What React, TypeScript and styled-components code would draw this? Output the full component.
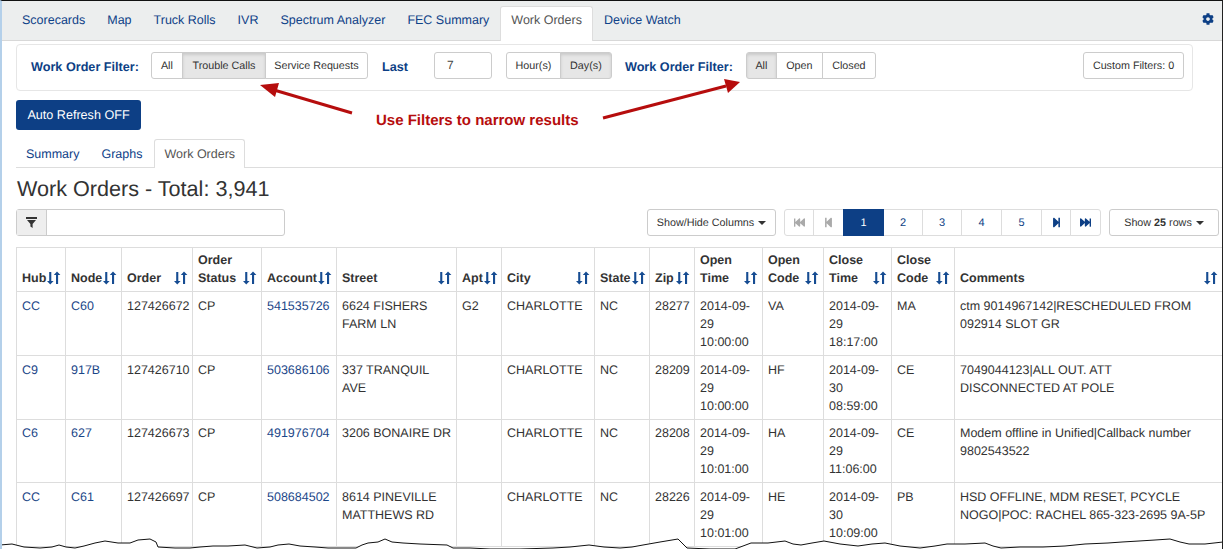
import React from "react";
import styled, { createGlobalStyle } from "styled-components";
import { FaCog, FaFastBackward, FaStepBackward, FaStepForward, FaFastForward } from "react-icons/fa";

const Global = createGlobalStyle`
  html, body { margin: 0; padding: 0; background: #fff; }
  body { font-family: "Liberation Sans", Arial, sans-serif; color: #333; text-rendering: geometricPrecision; }
  * { box-sizing: border-box; }
`;

const Frame = styled.div`
  position: relative;
  width: 1223px;
  height: 549px;
  overflow: hidden;
  background: #fff;
  border-top: 1px solid #111;
  border-left: 2px solid #b4d0ea;
  border-right: 1px solid #222;
`;

const Nav = styled.nav`
  height: 40px;
  background: #eceeee;
  border-bottom: 1px solid #d8d8d8;
  display: flex;
  align-items: flex-end;
  padding-left: 9px;
  position: relative;
`;

const NavTab = styled.div<{ $active?: boolean }>`
  height: ${(p) => (p.$active ? "35px" : "34px")};
  margin-bottom: ${(p) => (p.$active ? "-1px" : "0")};
  padding: 0 10px;
  border: 1px solid ${(p) => (p.$active ? "#ddd" : "transparent")};
  border-bottom: 0;
  border-radius: 3px 3px 0 0;
  background: ${(p) => (p.$active ? "#fff" : "transparent")};
  color: ${(p) => (p.$active ? "#555" : "#0f4288")};
  font-size: 12.5px;
  line-height: 26px;
  white-space: nowrap;
`;

const Cog = styled.span`
  margin-left: auto;
  margin-right: 8px;
  align-self: center;
  display: flex;
  margin-top: -4px;
  color: #0d3f85;
  font-size: 12px;
`;

const Content = styled.main`
  padding-left: 14px;
`;

const FilterPanel = styled.section`
  width: 1177px;
  height: 47px;
  margin-top: 3px;
  border: 1px solid #e6e6e6;
  border-radius: 4px;
  display: flex;
  align-items: flex-start;
  padding: 7px 8px 0 14px;
`;

const FilterLabel = styled.span<{ $ml?: number }>`
  font-size: 12.65px;
  font-weight: 700;
  color: #0d3f85;
  line-height: 31px;
  margin-left: ${(p) => p.$ml ?? 0}px;
  white-space: nowrap;
`;

const Group = styled.div<{ $ml: number }>`
  display: flex;
  margin-left: ${(p) => p.$ml}px;
`;

const GroupBtn = styled.div<{ $w: number; $on?: boolean }>`
  width: ${(p) => p.$w}px;
  height: 27px;
  margin-left: -1px;
  border: 1px solid #ccc;
  background: ${(p) => (p.$on ? "#e6e6e6" : "#fff")};
  box-shadow: ${(p) => (p.$on ? "inset 0 2px 3px rgba(0,0,0,.12)" : "none")};
  font-size: 10.75px;
  line-height: 26px;
  text-align: center;
  color: #333;
  white-space: nowrap;
  &:first-child { margin-left: 0; border-radius: 3px 0 0 3px; }
  &:last-child { border-radius: 0 3px 3px 0; }
`;

const NumberBox = styled.div`
  width: 58px;
  height: 27px;
  margin-left: 26px;
  border: 1px solid #ccc;
  border-radius: 3px;
  font-size: 12px;
  line-height: 24px;
  padding-left: 12px;
  color: #444;
`;

const PlainBtn = styled.div<{ $w: number; $h?: number }>`
  width: ${(p) => p.$w}px;
  height: ${(p) => p.$h ?? 27}px;
  border: 1px solid #ccc;
  border-radius: 3px;
  background: #fff;
  font-size: 10.75px;
  line-height: ${(p) => (p.$h ?? 27) - 1}px;
  text-align: center;
  color: #333;
  white-space: nowrap;
`;

const CustomFilters = styled(PlainBtn)`
  margin-left: auto;
`;

const RefreshBtn = styled.div`
  width: 125px;
  height: 30px;
  margin-top: 9px;
  border-radius: 3px;
  background: #0d3f85;
  color: #fff;
  font-size: 12.6px;
  line-height: 30px;
  text-align: center;
  white-space: nowrap;
`;

const SubNav = styled.div`
  height: 29px;
  margin-top: 9px;
  display: flex;
  align-items: flex-end;
  border-bottom: 1px solid #ddd;
`;

const SubTab = styled.div<{ $active?: boolean }>`
  height: ${(p) => (p.$active ? "29px" : "28px")};
  margin-bottom: ${(p) => (p.$active ? "-1px" : "0")};
  padding: 0 9px;
  margin-right: 2px;
  border: 1px solid ${(p) => (p.$active ? "#ddd" : "transparent")};
  border-bottom: 0;
  border-radius: 3px 3px 0 0;
  background: #fff;
  font-size: 12.5px;
  line-height: 28px;
  color: ${(p) => (p.$active ? "#555" : "#0f4288")};
  white-space: nowrap;
`;

const Title = styled.h1`
  margin: 9px 0 0 1px;
  font-size: 21.6px;
  font-weight: 400;
  line-height: 24px;
  color: #333;
  white-space: nowrap;
`;

const Toolbar = styled.div`
  display: flex;
  align-items: flex-start;
  margin-top: 8px;
  height: 27px;
`;

const FilterBox = styled.div`
  width: 269px;
  height: 27px;
  display: flex;
  border: 1px solid #ccc;
  border-radius: 3px;
`;

const FilterAddon = styled.div`
  width: 30px;
  background: #eee;
  border-right: 1px solid #ccc;
  display: flex;
  align-items: center;
  justify-content: center;
`;

const ColumnsBtn = styled(PlainBtn)`
  margin-left: 362px;
`;

const Caret = styled.span`
  display: inline-block;
  width: 0;
  height: 0;
  margin-left: 4px;
  vertical-align: middle;
  border-top: 4px solid #333;
  border-left: 4px solid transparent;
  border-right: 4px solid transparent;
`;

const Pager = styled.div`
  display: flex;
  margin-left: 8px;
  height: 27px;
`;

const PageItem = styled.div<{ $w: number; $on?: boolean; $off?: boolean }>`
  width: ${(p) => p.$w}px;
  height: 27px;
  margin-left: -1px;
  border: 1px solid ${(p) => (p.$on ? "#0d3f85" : "#ddd")};
  background: ${(p) => (p.$on ? "#0d3f85" : "#fff")};
  color: ${(p) => (p.$on ? "#fff" : p.$off ? "#aaa" : "#0d3f85")};
  font-size: 11px;
  display: flex;
  align-items: center;
  justify-content: center;
  position: relative;
  z-index: ${(p) => (p.$on ? 1 : 0)};
  &:first-child { margin-left: 0; border-radius: 3px 0 0 3px; }
  &:last-child { border-radius: 0 3px 3px 0; }
`;

const RowsBtn = styled(PlainBtn)`
  margin-left: 8px;
  b { font-weight: 700; }
`;

const Table = styled.table`
  width: 1205px;
  margin-top: 11px;
  table-layout: fixed;
  border-collapse: collapse;
  font-size: 12.5px;
  line-height: 18px;
`;

const Th = styled.th`
  border: 1px solid #ddd;
  padding: 2px 4px 4px 5px;
  height: 44px;
  vertical-align: bottom;
  text-align: left;
  font-weight: 700;
  color: #333;
  &:last-child { border-right: 0; }
`;

const ThInner = styled.div`
  display: flex;
  align-items: flex-end;
  justify-content: space-between;
`;

const SortSvg = styled.svg`
  flex: none;
  margin-bottom: 2px;
`;

const Td = styled.td`
  border: 1px solid #ddd;
  padding: 5px 2px 4px 5px;
  height: 64px;
  vertical-align: top;
  color: #333;
  tr:nth-child(3) > & { padding-top: 4px; height: 63px; }
  &:last-child { border-right: 0; padding-right: 14px; }
`;

const CellLink = styled.span`
  color: #1a4688;
`;

const Overlay = styled.svg`
  position: absolute;
  left: -2px;
  top: -1px;
  pointer-events: none;
`;

const Annotation = styled.div`
  position: absolute;
  left: 374px;
  top: 111px;
  font-size: 15px;
  font-weight: 700;
  line-height: 18px;
  color: #b60d0d;
  white-space: nowrap;
`;

const SortIcon = () => (
  <SortSvg width="15" height="14" viewBox="0 0 15 14">
    <path d="M3.2 1h2.1v9h2.3L4.25 13.5 1 10h2.2z" fill="#164c92" />
    <path d="M10 13h2.1V4h2.3L11 .5 7.8 4H10z" fill="#164c92" />
  </SortSvg>
);

const FunnelIcon = () => (
  <svg width="11" height="11" viewBox="0 0 11 11">
    <rect x="0" y="0" width="11" height="2" fill="#333" />
    <path d="M1 3h9L6.6 7v4L4.4 9.6V7z" fill="#333" />
  </svg>
);

const columns: { w: number; label: React.ReactNode }[] = [
  { w: 49, label: "Hub" },
  { w: 56, label: "Node" },
  { w: 71, label: "Order" },
  { w: 69, label: <>Order<br />Status</> },
  { w: 75, label: "Account" },
  { w: 120, label: "Street" },
  { w: 45, label: "Apt" },
  { w: 93, label: "City" },
  { w: 55, label: "State" },
  { w: 45, label: "Zip" },
  { w: 68, label: <>Open<br />Time</> },
  { w: 61, label: <>Open<br />Code</> },
  { w: 68, label: <>Close<br />Time</> },
  { w: 63, label: <>Close<br />Code</> },
  { w: 267, label: "Comments" },
];

const rows = [
  ["CC", "C60", "127426672", "CP", "541535726", "6624 FISHERS FARM LN", "G2", "CHARLOTTE", "NC", "28277", "2014-09-29 10:00:00", "VA", "2014-09-29 18:17:00", "MA", "ctm 9014967142|RESCHEDULED FROM 092914 SLOT GR"],
  ["C9", "917B", "127426710", "CP", "503686106", "337 TRANQUIL AVE", "", "CHARLOTTE", "NC", "28209", "2014-09-29 10:00:00", "HF", "2014-09-30 08:59:00", "CE", "7049044123|ALL OUT. ATT DISCONNECTED AT POLE"],
  ["C6", "627", "127426673", "CP", "491976704", "3206 BONAIRE DR", "", "CHARLOTTE", "NC", "28208", "2014-09-29 10:01:00", "HA", "2014-09-29 11:06:00", "CE", "Modem offline in Unified|Callback number 9802543522"],
  ["CC", "C61", "127426697", "CP", "508684502", "8614 PINEVILLE MATTHEWS RD", "", "CHARLOTTE", "NC", "28226", "2014-09-29 10:01:00", "HE", "2014-09-30 10:09:00", "PB", "HSD OFFLINE, MDM RESET, PCYCLE NOGO|POC: RACHEL 865-323-2695 9A-5P"],
];

const linked = new Set([0, 1, 4]);

const tornEdge =
  "M0 545 L12 544 L24 547 L40 548 L52 547 L59 545 L66 547 L75 548 L84 546 L95 543 L105 541 L118 543 L130 543 L138 540 L150 539 L156 542 L158 547 L175 548 L190 548 L200 547 L213 546 L228 546 L245 545 L257 548 L270 547 L278 545 L289 544 L300 546 L315 547 L328 548 L356 548 L362 545 L368 543 L378 542 L385 539 L392 542 L403 543 L420 544 L447 545 L453 548 L470 548 L490 549 L520 549 L553 548 L570 547 L589 545 L604 547 L620 548 L632 547 L643 545 L660 542 L678 539 L683 544 L687 548 L710 549 L735 549 L743 546 L751 543 L768 543 L785 541 L793 544 L801 545 L812 543 L824 541 L840 544 L858 546 L872 544 L885 543 L900 546 L920 548 L935 546 L947 544 L965 544 L985 543 L993 546 L1001 548 L1020 547 L1043 547 L1065 546 L1085 544 L1108 543 L1122 542 L1139 541 L1155 540 L1170 539 L1180 542 L1189 544 L1205 544 L1223 542";

const App = () => (
  <Frame>
    <Global />
    <Nav>
      {["Scorecards", "Map", "Truck Rolls", "IVR", "Spectrum Analyzer", "FEC Summary"].map((t) => (
        <NavTab key={t}>{t}</NavTab>
      ))}
      <NavTab $active>Work Orders</NavTab>
      <NavTab>Device Watch</NavTab>
      <Cog><FaCog /></Cog>
    </Nav>
    <Content>
      <FilterPanel>
        <FilterLabel>Work Order Filter:</FilterLabel>
        <Group $ml={12}>
          <GroupBtn $w={32}>All</GroupBtn>
          <GroupBtn $w={84} $on>Trouble Calls</GroupBtn>
          <GroupBtn $w={103}>Service Requests</GroupBtn>
        </Group>
        <FilterLabel $ml={14}>Last</FilterLabel>
        <NumberBox>7</NumberBox>
        <Group $ml={14}>
          <GroupBtn $w={55}>Hour(s)</GroupBtn>
          <GroupBtn $w={52} $on>Day(s)</GroupBtn>
        </Group>
        <FilterLabel $ml={13}>Work Order Filter:</FilterLabel>
        <Group $ml={13}>
          <GroupBtn $w={31} $on>All</GroupBtn>
          <GroupBtn $w={47}>Open</GroupBtn>
          <GroupBtn $w={54}>Closed</GroupBtn>
        </Group>
        <CustomFilters $w={101}>Custom Filters: 0</CustomFilters>
      </FilterPanel>
      <RefreshBtn>Auto Refresh OFF</RefreshBtn>
      <SubNav>
        <SubTab>Summary</SubTab>
        <SubTab>Graphs</SubTab>
        <SubTab $active>Work Orders</SubTab>
      </SubNav>
      <Title>Work Orders - Total: 3,941</Title>
      <Toolbar>
        <FilterBox>
          <FilterAddon><FunnelIcon /></FilterAddon>
        </FilterBox>
        <ColumnsBtn $w={129}>Show/Hide Columns<Caret /></ColumnsBtn>
        <Pager>
          <PageItem $w={30} $off><FaFastBackward /></PageItem>
          <PageItem $w={31} $off><FaStepBackward /></PageItem>
          <PageItem $w={41} $on>1</PageItem>
          <PageItem $w={40}>2</PageItem>
          <PageItem $w={40}>3</PageItem>
          <PageItem $w={41}>4</PageItem>
          <PageItem $w={41}>5</PageItem>
          <PageItem $w={30}><FaStepForward /></PageItem>
          <PageItem $w={31}><FaFastForward /></PageItem>
        </Pager>
        <RowsBtn $w={110}>Show <b>25</b> rows<Caret /></RowsBtn>
      </Toolbar>
      <Table>
        <colgroup>
          {columns.map((c, i) => (
            <col key={i} style={{ width: c.w }} />
          ))}
        </colgroup>
        <thead>
          <tr>
            {columns.map((c, i) => (
              <Th key={i}>
                <ThInner>
                  <span>{c.label}</span>
                  <SortIcon />
                </ThInner>
              </Th>
            ))}
          </tr>
        </thead>
        <tbody>
          {rows.map((r, ri) => (
            <tr key={ri}>
              {r.map((v, ci) => (
                <Td key={ci}>{linked.has(ci) ? <CellLink>{v}</CellLink> : v}</Td>
              ))}
            </tr>
          ))}
        </tbody>
      </Table>
    </Content>
    <Annotation>Use Filters to narrow results</Annotation>
    <Overlay width="1223" height="549" viewBox="0 0 1223 549">
      <path d="M352 113 L274 90" stroke="#b60d0d" strokeWidth="3" fill="none" />
      <path d="M260 85 L279 83 L275 97 Z" fill="#b60d0d" />
      <path d="M603 118 L726 86" stroke="#b60d0d" strokeWidth="3" fill="none" />
      <path d="M740 82 L724 79 L728 93 Z" fill="#b60d0d" />
      <path d={`${tornEdge} L1223 549 L0 549 Z`} fill="#fff" stroke="none" />
      <path d={tornEdge} fill="none" stroke="#111" strokeWidth="1" />
    </Overlay>
  </Frame>
);

export default App;
